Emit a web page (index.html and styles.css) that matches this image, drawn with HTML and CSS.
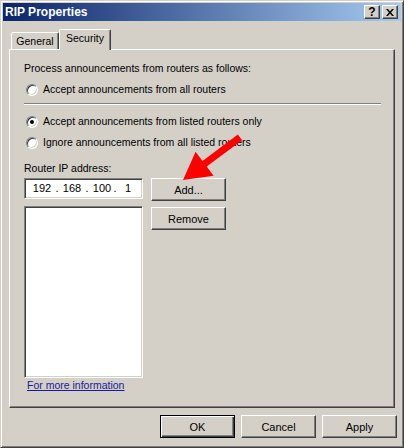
FILE: index.html
```html
<!DOCTYPE html>
<html>
<head>
<meta charset="utf-8">
<link rel="stylesheet" href="styles.css">
</head>
<body>
<div class="window">
  <div class="titlebar">
    <span class="title">RIP Properties</span>
    <div class="tbtns">
      <span class="tbtn help">?</span>
      <span class="tbtn close"><svg width="8" height="7" viewBox="0 0 8 7"><path d="M0 0h2l2 2.5L6 0h2L5 3.5 8 7H6L4 4.5 2 7H0l3-3.5z" fill="#000"/></svg></span>
    </div>
  </div>
  <div class="tabs">
    <div class="tab">General</div>
    <div class="tab active">Security</div>
  </div>
  <div class="panel">
    <div class="text1">Process announcements from routers as follows:</div>
    <div class="opt r1"><span class="radio"></span><span>Accept announcements from all routers</span></div>
    <div class="sep"></div>
    <div class="opt r2"><span class="radio checked"></span><span>Accept announcements from listed routers only</span></div>
    <div class="opt r3"><span class="radio"></span><span>Ignore announcements from all listed routers</span></div>
    <div class="label">Router IP address:</div>
    <div class="iprow">
      <div class="leftcol">
        <div class="ipbox"><span class="n">192</span><span class="d">.</span><span class="n">168</span><span class="d">.</span><span class="n">100</span><span class="d">.</span><span class="n">1</span></div>
        <div class="listbox"></div>
      </div>
      <div class="btncol">
        <div class="btn">Add...</div>
        <div class="btn">Remove</div>
      </div>
    </div>
    <a class="link" href="#">For more information</a>
  </div>
  <div class="footer">
    <div class="btn default">OK</div>
    <div class="btn">Cancel</div>
    <div class="btn">Apply</div>
  </div>
  <svg class="arrow" width="404" height="448" viewBox="0 0 404 448">
    <polygon fill="#ff0000" points="183,180 213.6,175.8 206.7,166.6 242.1,140.2 237.9,134.6 202.5,161 195.6,151.8"/>
  </svg>
</div>
</body>
</html>
```
FILE: styles.css
```css
* { box-sizing: border-box; }
html, body { margin: 0; padding: 0; }
body {
  width: 404px;
  height: 448px;
  overflow: hidden;
  font-family: "Liberation Sans", Arial, sans-serif;
  font-size: 10.5px;
  color: #000;
  background: #d4d0c8;
}
.window {
  position: relative;
  width: 404px;
  height: 448px;
  background: #d4d0c8;
  border: 1px solid;
  border-color: #d4d0c8 #404040 #404040 #d4d0c8;
  box-shadow: inset 1px 1px #fff, inset -1px -1px #808080;
  padding: 2px;
}
.titlebar {
  height: 18px;
  background: linear-gradient(to right, #0a246a, #a6caf0);
  display: flex;
  align-items: center;
  justify-content: space-between;
  padding: 0 3px 0 2px;
}
.title {
  color: #fff;
  font-weight: bold;
  font-size: 12px;
  line-height: 18px;
}
.tbtns { display: flex; gap: 2px; }
.tbtn {
  width: 16px;
  height: 14px;
  background: #d4d0c8;
  border: 1px solid;
  border-color: #fff #404040 #404040 #fff;
  box-shadow: inset -1px -1px #808080;
  display: flex;
  align-items: center;
  justify-content: center;
  font-weight: bold;
  font-size: 12px;
  line-height: 12px;
}
.tabs {
  display: flex;
  align-items: flex-end;
  height: 20px;
  margin: 8px 0 0 8px;
  position: relative;
  z-index: 2;
}
.tab {
  width: 48px;
  height: 17px;
  border: 1px solid;
  border-bottom: none;
  border-color: #fff #404040 transparent #fff;
  border-radius: 2px 2px 0 0;
  box-shadow: inset -1px 0 #808080;
  text-align: center;
  line-height: 17px;
  background: #d4d0c8;
}
.tab.active {
  width: 52px;
  height: 21px;
  margin-bottom: -1px;
  line-height: 16px;
}
.panel {
  position: relative;
  z-index: 1;
  margin-left: 6px;
  width: 386px;
  height: 359px;
  border: 1px solid;
  border-color: #fff #404040 #404040 #fff;
  box-shadow: inset -1px -1px #808080;
  padding: 12px 0 0 14px;
}
.text1 { line-height: 13px; }
.opt {
  display: flex;
  align-items: center;
  height: 13px;
  line-height: 13px;
}
.r1 { margin-top: 8px; }
.r2 { margin-top: 10px; }
.r3 { margin-top: 8px; }
.radio {
  width: 12px;
  height: 12px;
  border-radius: 50%;
  background: #fff;
  border: 1px solid;
  border-color: #808080 #fff #fff #808080;
  box-shadow: inset 1px 1px #404040, inset -1px -1px #d4d0c8;
  margin: 0 5px 0 2px;
  flex: none;
  display: flex;
  align-items: center;
  justify-content: center;
}
.radio.checked::after {
  content: "";
  width: 4px;
  height: 4px;
  border-radius: 50%;
  background: #000;
}
.sep {
  margin-top: 7px;
  width: 357px;
  height: 2px;
  border-top: 1px solid #808080;
  border-bottom: 1px solid #fff;
}
.label { margin-top: 13px; line-height: 13px; }
.iprow {
  display: flex;
  gap: 8px;
  margin-top: 3px;
}
.leftcol {
  display: flex;
  flex-direction: column;
  gap: 7px;
  width: 119px;
}
.ipbox, .listbox {
  background: #fff;
  border: 1px solid;
  border-color: #808080 #fff #fff #808080;
  box-shadow: inset 1px 1px #404040, inset -1px -1px #d4d0c8;
}
.ipbox {
  height: 21px;
  display: flex;
  align-items: center;
  padding-left: 7px;
  line-height: 13px;
  font-size: 11px;
}
.ipbox .n { width: 20px; text-align: center; }
.ipbox .d { width: 10px; text-align: center; }
.ipbox .d:nth-child(6) { width: 6px; }
.listbox { height: 172px; }
.btncol {
  display: flex;
  flex-direction: column;
  gap: 6px;
}
.btn {
  width: 75px;
  height: 23px;
  background: #d4d0c8;
  border: 1px solid;
  border-color: #fff #404040 #404040 #fff;
  box-shadow: inset -1px -1px #808080;
  display: flex;
  align-items: center;
  justify-content: center;
  font-size: 11px;
}
.btn.default {
  border-color: #000;
  box-shadow: inset 1px 1px #fff, inset -1px -1px #404040, inset -2px -2px #808080;
}
.link {
  display: block;
  margin: 1px 0 0 3px;
  line-height: 13px;
  color: #1a1a9c;
  text-decoration: underline;
  width: max-content;
}
.footer {
  display: flex;
  justify-content: flex-end;
  gap: 6px;
  margin-top: 7px;
  padding-right: 4px;
}
.arrow {
  position: absolute;
  left: -1px;
  top: -1px;
  z-index: 5;
  pointer-events: none;
}
```
